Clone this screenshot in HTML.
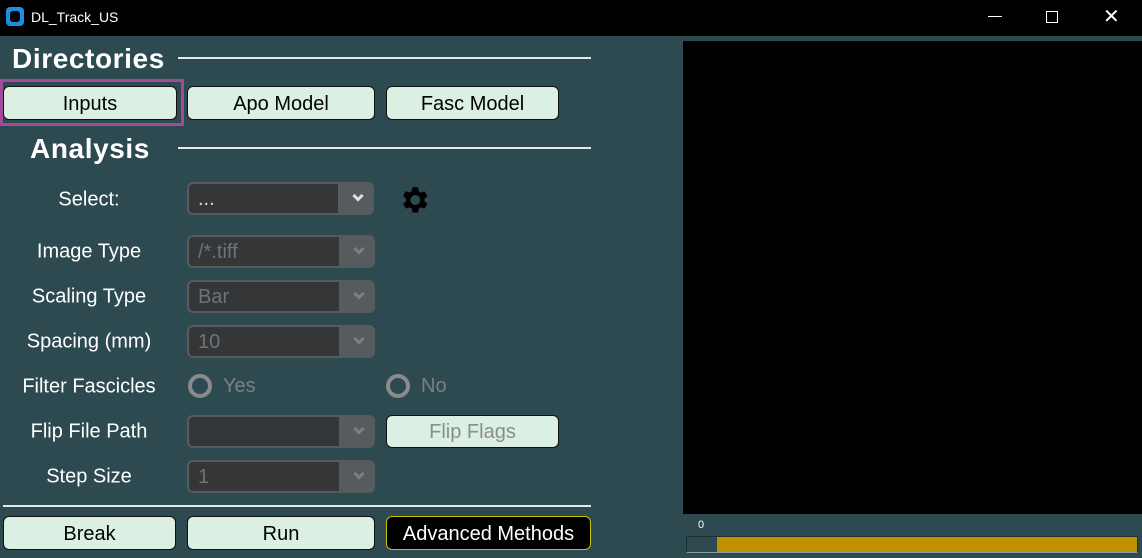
<!DOCTYPE html><html><head><style>
*{margin:0;padding:0;box-sizing:border-box}
body{width:1142px;height:558px;background:#2e4a51;position:relative;overflow:hidden;font-family:"Liberation Sans",sans-serif;color:#fff}
.a{position:absolute}
.lbl{position:absolute;font-size:20px;color:#fff;text-align:center;width:178px;left:0;transform:translateY(-45%)}
.btn{position:absolute;background:#dcefe3;border:1.5px solid #111;border-radius:6px;color:#000;font-size:20px;display:flex;align-items:center;justify-content:center;padding-top:2px}
.cb{position:absolute;left:187px;width:188px;height:33px;background:#343638;border:2px solid #565b5e;border-radius:6px;font-size:20px;color:#6f7375;padding-left:9px;line-height:31px}
.cb::after{content:"";position:absolute;right:0;top:0;width:34px;height:100%;background:#565b5e}
.cb i{position:absolute;right:10px;z-index:2;border-left:3px solid #7b7f82;border-bottom:3px solid #7b7f82;transform:rotate(-45deg);width:8px;height:8px;top:8px}
.h{position:absolute;font-weight:bold;font-size:28px;color:#fff;letter-spacing:0.6px}
.line{position:absolute;height:2px;background:#e8e8e8}
.rad{position:absolute;width:24px;height:24px;border:4px solid #8b8b8b;border-radius:50%}
</style></head><body>
<div class="a" style="left:0;top:0;width:1142px;height:36px;background:#000"></div>
<div class="a" style="left:6px;top:7px;width:18px;height:19px;background:#1b8fe0;border-radius:4px"></div>
<div class="a" style="left:10px;top:11px;width:10px;height:11px;background:#000;border-radius:3px"></div>
<div class="a" style="left:31px;top:9px;font-size:14px;color:#fff">DL_Track_US</div>
<div class="a" style="left:988px;top:16px;width:14px;height:1px;background:#fff"></div>
<div class="a" style="left:1046px;top:11px;width:12px;height:12px;border:1px solid #fff"></div>
<div class="a" style="left:1103px;top:4px;font-size:20px;color:#fff">✕</div>
<div class="a" style="left:683px;top:41px;width:459px;height:473px;background:#000"></div>
<div class="a" style="left:698px;top:519px;font-size:11px;color:#fff">0</div>
<div class="a" style="left:686px;top:536px;width:452px;height:17px;background:#c28f00;border:1px solid #1d3035;border-bottom-color:#8a9da0"></div>
<div class="a" style="left:687px;top:537px;width:30px;height:15px;background:#2e4a51"></div>

<div class="h" style="left:12px;top:43px">Directories</div>
<div class="line" style="left:178px;top:57px;width:413px"></div>
<div class="a" style="left:0;top:79px;width:184px;height:47px;border:3.5px solid #a04b9e"></div>
<div class="btn" style="left:3px;top:86px;width:174px;height:34px">Inputs</div>
<div class="btn" style="left:187px;top:86px;width:188px;height:34px">Apo Model</div>
<div class="btn" style="left:386px;top:86px;width:173px;height:34px">Fasc Model</div>
<div class="h" style="left:30px;top:133px">Analysis</div>
<div class="line" style="left:178px;top:147px;width:413px"></div>

<div class="lbl" style="top:199px">Select:</div>
<div class="cb" style="top:182px;width:187px;color:#ddd">...<i style="border-color:#ddd"></i></div>
<svg class="a" style="left:397px;top:183px" width="34" height="34" viewBox="0 0 24 24"><path fill="#000" d="M19.4 13a7.5 7.5 0 0 0 0-2l2.1-1.6-2-3.5-2.5 1a7 7 0 0 0-1.7-1L14.9 3h-4l-.4 2.7a7 7 0 0 0-1.7 1l-2.5-1-2 3.5L6.4 11a7.5 7.5 0 0 0 0 2l-2.1 1.6 2 3.5 2.5-1a7 7 0 0 0 1.7 1l.4 2.7h4l.4-2.7a7 7 0 0 0 1.7-1l2.5 1 2-3.5zM12.9 15.5a3.5 3.5 0 1 1 0-7 3.5 3.5 0 0 1 0 7z"/></svg>

<div class="lbl" style="top:251px">Image Type</div>
<div class="cb" style="top:235px">/*.tiff<i></i></div>
<div class="lbl" style="top:296px">Scaling Type</div>
<div class="cb" style="top:280px">Bar<i></i></div>
<div class="lbl" style="top:341px">Spacing (mm)</div>
<div class="cb" style="top:325px">10<i></i></div>
<div class="lbl" style="top:386px">Filter Fascicles</div>
<div class="rad" style="left:188px;top:374px"></div>
<div class="a" style="left:223px;top:375px;font-size:20px;color:#7b7f82">Yes</div>
<div class="rad" style="left:386px;top:374px"></div>
<div class="a" style="left:421px;top:375px;font-size:20px;color:#7b7f82">No</div>
<div class="lbl" style="top:431px">Flip File Path</div>
<div class="cb" style="top:415px"><i></i></div>
<div class="btn" style="left:386px;top:415px;width:173px;height:33px;color:#8a8f8c">Flip Flags</div>
<div class="lbl" style="top:476px">Step Size</div>
<div class="cb" style="top:460px">1<i></i></div>

<div class="line" style="left:3px;top:505px;width:588px"></div>
<div class="btn" style="left:3px;top:516px;width:173px;height:34px">Break</div>
<div class="btn" style="left:187px;top:516px;width:188px;height:34px">Run</div>
<div class="btn" style="left:386px;top:516px;width:205px;height:34px;background:#000;color:#fff;border-color:#c8c000">Advanced Methods</div>
</body></html>
